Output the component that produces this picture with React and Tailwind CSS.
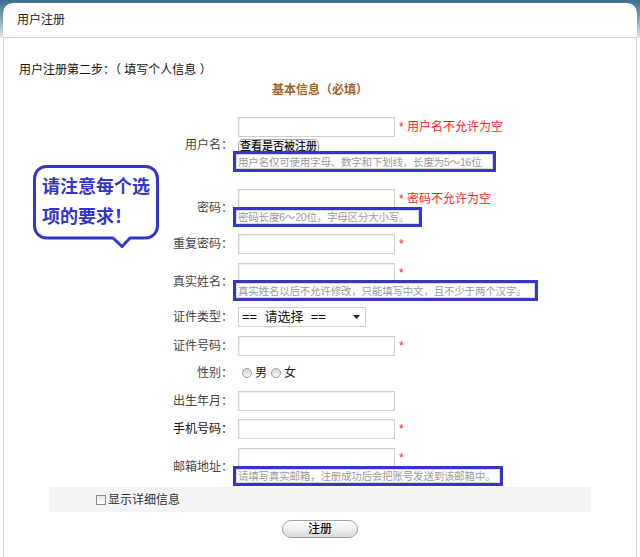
function Label({ children, dark }) {
  return (
    <div className={dark ? 'w-[229px] shrink-0 text-right text-[#111]' : 'w-[229px] shrink-0 text-right text-[#444]'}>
      {children}
    </div>
  );
}

function TextBox({ note }) {
  return (
    <div className="flex items-center h-[20px]">
      <div className="w-[157px] h-[20px] border border-[#cfcfcf] bg-white shadow-[inset_1px_1px_1px_#eee]" />
      {note !== undefined && (
        <span className="ml-[4px] text-[#ff1a1a] leading-[14px] whitespace-pre">{note}</span>
      )}
    </div>
  );
}

function Hint({ children, width, offset, height }) {
  return (
    <div
      className={`relative z-10 -ml-[5px] border-[3px] border-[#3636c6] bg-white shadow-[inset_0_0_0_1px_#d8d8e8] pl-[2px] text-[10.5px] tracking-[-0.2px] text-[#9a9a9a] flex items-center whitespace-nowrap ${width} ${offset} ${height}`}
    >
      {children}
    </div>
  );
}

function Row({ label, mt, dark, children }) {
  return (
    <div className={`flex items-center ${mt}`}>
      <Label dark={dark}>{label}</Label>
      <div className="ml-[5px] flex flex-col items-start">{children}</div>
    </div>
  );
}

function Radio({ text }) {
  return (
    <span className="flex items-center">
      <span className="w-[10px] h-[10px] rounded-full border border-[#9a9a9a] bg-gradient-to-b from-[#d8d8d8] to-[#f8f8f8]" />
      <span className="ml-[3px] text-[#222]">{text}</span>
    </span>
  );
}

function Bubble() {
  return (
    <div className="absolute left-[29px] top-[127px] w-[126px] h-[84px]">
      <svg width="126" height="84" viewBox="0 0 126 84" className="absolute inset-0">
        <path
          d="M13.5 1.5 H112.5 A12 12 0 0 1 124.5 13.5 V61 A12 12 0 0 1 112.5 73 H97 L89 81.5 L80 73 H13.5 A12 12 0 0 1 1.5 61 V13.5 A12 12 0 0 1 13.5 1.5 Z"
          fill="#ffffff"
          stroke="#3535c8"
          strokeWidth="3"
          strokeLinejoin="round"
        />
      </svg>
      <div className="absolute left-[9px] top-[7px] text-[18px] leading-[30px] font-bold text-[#3535c8] whitespace-nowrap">
        <div>请注意每个选</div>
        <div>项的要求！</div>
      </div>
    </div>
  );
}

export default function App() {
  return (
    <div className="w-[640px] h-[557px] overflow-hidden bg-white text-[12px] leading-[14px] font-['Liberation_Sans','Noto_Sans_CJK_SC',sans-serif]">
      <div className="h-[38px] px-[3px] pt-[3px] bg-gradient-to-b from-[#3a6f90] via-[#7fa3bb] to-[#dfe6eb]">
        <div className="h-[35px] rounded-t-[10px] bg-white border-b border-[#d6d6d6] flex items-center pl-[14px] text-[#222]">
          用户注册
        </div>
      </div>

      <div className="relative mx-[3px] h-[519px] border-x border-[#d2d2d2]">
        <div className="pt-[25px] pl-[15px] text-[#111] whitespace-pre">{'用户注册第二步：（ 填写个人信息 ）'}</div>
        <div className="mt-[6px] text-center font-bold text-[#a9601c]">基本信息（必填）</div>

        <div className="mt-[20px]">
          <Row label="用户名：" mt="mt-0">
            <TextBox note="* 用户名不允许为空" />
            <div className="mt-[2px] h-[16px] rounded-[5px] border border-[#a8a8a8] bg-[#f2f2f2] text-[11px] leading-[13px] font-medium text-[#111] px-[1px] whitespace-nowrap">
              查看是否被注册
            </div>
            <Hint width="w-[263px]" offset="-mt-[4px]" height="h-[21px]">
              用户名仅可使用字母、数字和下划线，长度为5～16位
            </Hint>
          </Row>

          <Row label="密码：" mt="mt-[17px]">
            <TextBox note="* 密码不允许为空" />
            <Hint width="w-[189px]" offset="-mt-[2px]" height="h-[20px]">
              密码长度6～20位，字母区分大小写。
            </Hint>
          </Row>

          <Row label="重复密码：" mt="mt-[7px]">
            <TextBox note="*" />
          </Row>

          <Row label="真实姓名：" mt="mt-[9px]">
            <TextBox note="*" />
            <Hint width="w-[305px]" offset="-mt-[3px]" height="h-[21px]">
              真实姓名以后不允许修改，只能填写中文，且不少于两个汉字。
            </Hint>
          </Row>

          <Row label="证件类型：" mt="mt-[6px]">
            <div className="w-[128px] h-[20px] border border-[#cfcfcf] bg-white flex items-center justify-between pl-[3px] pr-[5px] text-[13px] text-[#111]">
              <span className="whitespace-pre">{'==  请选择  =='}</span>
              <svg width="7" height="4" viewBox="0 0 7 4">
                <path d="M0 0 H7 L3.5 4 Z" fill="#222" />
              </svg>
            </div>
          </Row>

          <Row label="证件号码：" mt="mt-[9px]">
            <TextBox note="*" />
          </Row>

          <Row label="性别：" mt="mt-[8px]">
            <div className="h-[18px] flex items-center gap-[4px] pl-[4px]">
              <Radio text="男" />
              <Radio text="女" />
            </div>
          </Row>

          <Row label="出生年月：" mt="mt-[9px]">
            <TextBox />
          </Row>

          <Row label="手机号码：" mt="mt-[8px]" dark>
            <TextBox note="*" />
          </Row>

          <Row label="邮箱地址：" mt="mt-[9px]">
            <TextBox note="*" />
            <Hint width="w-[270px]" offset="-mt-[2px]" height="h-[20px]">
              请填写真实邮箱，注册成功后会把账号发送到该邮箱中。
            </Hint>
          </Row>
        </div>

        <div className="mt-[1px] ml-[45px] w-[542px] h-[25px] bg-[#f4f5f7] flex items-center pl-[47px]">
          <span className="w-[10px] h-[10px] border border-[#8a8a8a] bg-gradient-to-b from-[#e4e4e4] to-white" />
          <span className="ml-[2px] text-[#333]">显示详细信息</span>
        </div>

        <div className="mt-[8px] flex justify-center">
          <div className="w-[76px] h-[18px] rounded-full border border-[#a4a4a4] bg-gradient-to-b from-white via-[#f0f0f0] to-[#d8d8d8] flex items-center justify-center text-[#111] font-medium">
            注册
          </div>
        </div>

        <Bubble />
      </div>
    </div>
  );
}
